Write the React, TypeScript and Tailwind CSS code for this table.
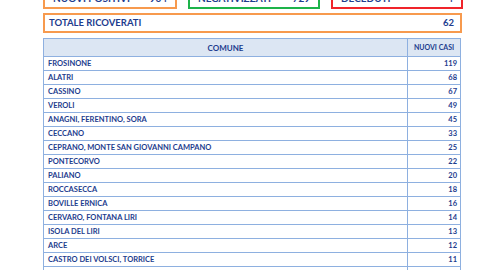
import React from 'react';

const rows: [string, number][] = [
  ['FROSINONE', 119],
  ['ALATRI', 68],
  ['CASSINO', 67],
  ['VEROLI', 49],
  ['ANAGNI, FERENTINO, SORA', 45],
  ['CECCANO', 33],
  ['CEPRANO, MONTE SAN GIOVANNI CAMPANO', 25],
  ['PONTECORVO', 22],
  ['PALIANO', 20],
  ['ROCCASECCA', 18],
  ['BOVILLE ERNICA', 16],
  ['CERVARO, FONTANA LIRI', 14],
  ['ISOLA DEL LIRI', 13],
  ['ARCE', 12],
  ['CASTRO DEI VOLSCI, TORRICE', 11],
  ['ARPINO', 10],
];

export default function App() {
  return (
    <div className="w-[480px] h-[270px] overflow-hidden bg-white font-['Lato','Liberation_Sans',sans-serif] font-bold text-[#1d3c8e]">
      {/* Riepilogo */}
      <div className="flex mt-[-12px] ml-[43px] gap-[11px]">
        <div className="w-[134px] h-[21px] border-2 border-[#f79a4e] flex items-center justify-between px-[8px] text-[10px]">
          <span>NUOVI POSITIVI</span>
          <span>904</span>
        </div>
        <div className="w-[132px] h-[21px] border-2 border-[#1db34a] flex items-center justify-between px-[8px] text-[10px]">
          <span>NEGATIVIZZATI</span>
          <span>729</span>
        </div>
        <div className="w-[132px] h-[21px] border-2 border-[#f0242a] flex items-center justify-between px-[8px] text-[10px]">
          <span>DECEDUTI</span>
          <span>4</span>
        </div>
      </div>

      <div className="ml-[43px] mt-[4px] w-[419px] h-[20px] border-2 border-[#f79a4e] flex items-center justify-between pl-[4px] pr-[6px] text-[9.5px]">
        <span>TOTALE RICOVERATI</span>
        <span>62</span>
      </div>

      {/* Tabella comuni */}
      <div className="ml-[43px] mt-[5px] w-[418px] border border-[#8eb0e0] text-[7.5px]">
        <div className="flex h-[18px] bg-[#dce6f3] border-b border-[#8eb0e0]">
          <div className="w-[364px] flex items-center justify-center border-r border-[#8eb0e0] text-[8px]">COMUNE</div>
          <div className="flex-1 flex items-center justify-center text-[7px]">NUOVI CASI</div>
        </div>
        {rows.map(([name, n]) => (
          <div key={name} className="flex h-[14px] border-b border-[#8eb0e0]">
            <div className="w-[364px] flex items-center pl-[4px] border-r border-[#8eb0e0]">{name}</div>
            <div className="flex-1 flex items-center justify-end pr-[3px]">{n}</div>
          </div>
        ))}
      </div>
    </div>
  );
}
